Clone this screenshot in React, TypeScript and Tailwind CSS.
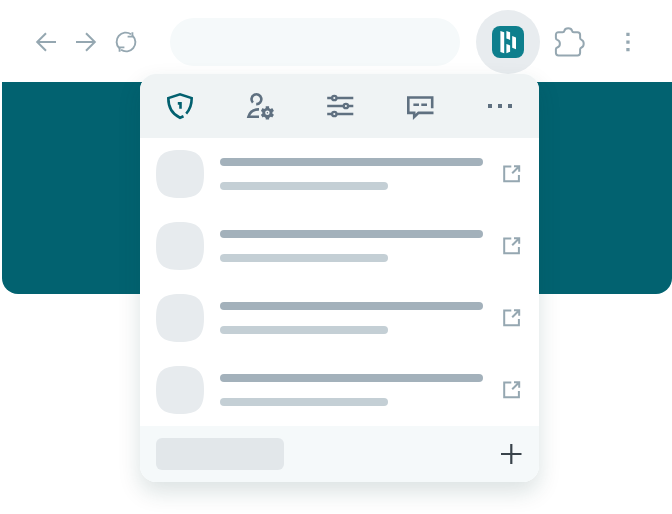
import type { ReactNode } from "react";

type IconProps = { size: number; className?: string; width?: number; children: ReactNode };

function Icon({ size, className = "", width = 2, children }: IconProps) {
  return (
    <svg
      width={size}
      height={size}
      viewBox={`0 0 ${size} ${size}`}
      fill="none"
      stroke="currentColor"
      strokeWidth={width}
      className={`shrink-0 ${className}`}
      aria-hidden="true"
    >
      {children}
    </svg>
  );
}

function Toolbar() {
  return (
    <header className="flex h-[82px] items-start bg-white pl-[34px] text-[#95a7b1]">
      <div className="flex h-[84px] items-center gap-4">
        <Icon size={24} width={2}>
          <path d="M22 12H3M12 3.2L3.2 12l8.8 8.8" />
        </Icon>
        <Icon size={24} width={2}>
          <path d="M2 12h19M12 3.2l8.8 8.8-8.8 8.8" />
        </Icon>
        <Icon size={24} width={1.9}>
          <path d="M5.2 18.2A9.2 9.2 0 0 1 17 4.2M18.8 5.8A9.2 9.2 0 0 1 7 19.8" />
          <path d="M18.4 2.2v4.4h-4.8M5.6 21.8v-4.4h4.8" />
        </Icon>
      </div>
      <div className="mt-[18px] ml-8 h-12 w-[290px] rounded-full bg-[#f5f9fa]" />
      <div className="mt-[10px] ml-4 flex size-16 items-center justify-center rounded-full bg-[#e8ecef]">
        <svg width="32" height="32" viewBox="0 0 32 32" aria-hidden="true">
          <rect width="32" height="32" rx="8" fill="#0e7f8d" />
          <g fill="white">
            <path d="M8.4 4.9l3.8 1.4v21l-3.8-1.4zM14.4 4.9L18.1 6.3v7.6l-3.7-1.4zM14.4 18l3.7 1.4v6.3l-3.7 1.5zM20.2 10l3.8 1.4v11.8l-3.8-1.4z" />
          </g>
        </svg>
      </div>
      <div className="flex h-[84px] items-center">
        <Icon size={34} width={2} className="ml-[13px]">
          <path
            d="M5.5 7.2h4.2c1.2 0 1.5-.6 1.7-1.5.4-1.7 1.8-2.5 3.8-2.5s3.4.8 3.8 2.5c.2.9.6 1.5 1.8 1.5h3.7c1.7 0 2.6.9 2.6 2.6v3.3c0 1 .5 1.4 1.4 1.8 1.4.6 2.2 1.8 2.2 3.8s-.8 3.2-2.2 3.8c-.9.4-1.4.8-1.4 1.8v3.5c0 1.7-.9 2.6-2.6 2.6h-19c-1.7 0-2.6-.9-2.6-2.6v-3.5c0-1 .4-1.4 1.4-1.8 1.7-.6 2.6-1.9 2.6-3.8s-.9-3.2-2.6-3.8c-1-.4-1.4-.8-1.4-1.8V9.8c0-1.7.9-2.6 2.6-2.6z"
            strokeLinejoin="round"
          />
        </Icon>
        <svg width="4" height="20" viewBox="0 0 4 20" fill="currentColor" className="ml-[39px]" aria-hidden="true">
          <path d="M.3 .8h3.3v3.2H.3zM.3 8.5h3.3v3.2H.3zM.3 16.1h3.3v3.2H.3z" />
        </svg>
      </div>
    </header>
  );
}

function Tabs() {
  return (
    <nav className="flex h-16 items-center gap-12 bg-[#eff3f4] pl-6 text-[#5f7080]">
      <Icon size={32} width={2.6} className="text-[#02606f]">
        <path d="M19.5 26.2L16 27.8C8.5 24.4 4.3 18.5 4.3 8.1L16 4.3l11.7 3.8c0 6.6-1.8 11.6-5.5 15.5" />
        <path d="M13.8 13.4h2.7v5.4" />
      </Icon>
      <Icon size={32} width={2.6}>
        <path d="M8.9 12.6A4.9 4.9 0 1 1 12.2 14.1" />
        <path d="M15 19.4c-5.6-.2-9.1 2.3-10.5 7.3H15" />
        <circle cx="23.4" cy="22.8" r="3.7" strokeWidth="2.9" />
        <path
          d="M23.4 16.2v2.5M23.4 26.9v2.5M17.7 19.5l2 1.2M27.1 24.9l2 1.2M29.1 19.5l-2 1.2M19.7 24.9l-2 1.2"
          strokeWidth="3.4"
        />
        <circle cx="23.4" cy="22.8" r=".7" fill="currentColor" stroke="none" />
      </Icon>
      <Icon size={32} width={2.3}>
        <path d="M3.2 8h4.9M12.5 8h16.8M3.2 16h16.4M24.2 16h5.1M3.2 24h4.9M12.5 24h16.8" />
        <circle cx="10.3" cy="8" r="2.2" />
        <circle cx="21.9" cy="16" r="2.2" />
        <circle cx="10.3" cy="24" r="2.2" />
      </Icon>
      <Icon size={32} width={2.6}>
        <path d="M28.2 18.3V7.5H4.3v15.4h5.9v4.1l4.3-4.1h15" />
        <path d="M9.4 14.7H15M17.3 14.7H23" />
      </Icon>
      <div className="flex w-8 items-center justify-center gap-1.5">
        <span className="size-1 bg-current" />
        <span className="size-1 bg-current" />
        <span className="size-1 bg-current" />
      </div>
    </nav>
  );
}

function Row() {
  return (
    <li className="flex h-[72px] items-center pl-4">
      <svg width="48" height="48" viewBox="0 0 48 48" className="shrink-0" aria-hidden="true">
        <path d="M0 24C0 6 6 0 24 0s24 6 24 24-6 24-24 24S0 42 0 24z" fill="#e7ebee" />
      </svg>
      <div className="ml-4 flex w-[263px] shrink-0 flex-col gap-4">
        <span className="h-2 rounded-full bg-[#a3b1bb]" />
        <span className="h-2 w-[168px] rounded-full bg-[#c4cfd5]" />
      </div>
      <Icon size={24} width={2} className="ml-[17px] text-[#95a7b1]">
        <path d="M11.3 4.4H4.2v14.8h14.7V12.9M14 4.2h5.2v5.6M19 4.5l-6.8 6.8" />
      </Icon>
    </li>
  );
}

export default function App() {
  return (
    <div className="relative h-[514px] w-[672px] overflow-hidden bg-white">
      <Toolbar />
      <main className="ml-0.5 h-[212px] rounded-b-2xl bg-[#026270]" />
      <section className="absolute top-[74px] left-[140.3px] w-[399px] overflow-hidden rounded-2xl bg-white shadow-[0_10px_22px_rgba(12,60,60,0.15)]">
        <Tabs />
        <ul>
          {[0, 1, 2, 3].map((row) => (
            <Row key={row} />
          ))}
        </ul>
        <footer className="flex h-14 items-center justify-between bg-[#f5f9fa] pr-4 pl-4">
          <div className="h-8 w-32 rounded-md bg-[#e2e7ea]" />
          <Icon size={24} width={2.2} className="text-[#39434a]">
            <path d="M2 12h20.5M12.3 1.9v20.2" />
          </Icon>
        </footer>
      </section>
    </div>
  );
}
